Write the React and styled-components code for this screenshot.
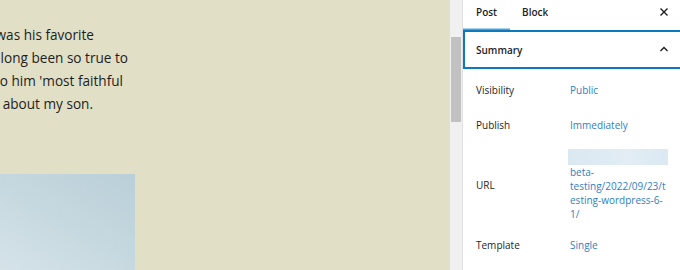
import styled, { createGlobalStyle } from "styled-components";

const GlobalStyle = createGlobalStyle`
  html, body {
    margin: 0;
    padding: 0;
    background: #ffffff;
  }
  body {
    font-family: "Open Sans", "Noto Sans", sans-serif;
  }
`;

const Page = styled.div`
  display: flex;
  width: 680px;
  height: 270px;
  overflow: hidden;
`;

const Editor = styled.div`
  width: 450px;
  flex-shrink: 0;
  background: #e1e0c6;
  display: flex;
  flex-direction: column;
  justify-content: space-between;
  overflow: hidden;
`;

const Paragraph = styled.div`
  padding-top: 23px;
  font-size: 13.6px;
  line-height: 23px;
  color: #1e1e1e;
  white-space: nowrap;
`;

/* the paragraph is scrolled off to the left, so each line is pinned by its end */
const Line = styled.div`
  display: flex;
  justify-content: flex-end;
  width: ${(p) => p.$end}px;
`;

const Picture = styled.div`
  width: 135px;
  height: 96px;
  background: linear-gradient(30deg, #d5e3e9 0%, #c6d8df 50%, #bacfd9 100%);
`;

const ScrollTrack = styled.div`
  width: 12px;
  flex-shrink: 0;
  background: #f0f0f0;
  padding: 37px 1px 0 1px;
  box-sizing: border-box;
`;

const ScrollThumb = styled.div`
  width: 10px;
  height: 85px;
  background: #c1c1c1;
`;

const Sidebar = styled.div`
  width: 218px;
  flex-shrink: 0;
  border-left: 1px solid #e0e0e0;
  background: #ffffff;
  font-size: 10px;
  color: #1e1e1e;
`;

const TabBar = styled.div`
  display: flex;
  align-items: stretch;
  height: 30px;
`;

const Tab = styled.div`
  padding: 0 ${(p) => (p.$active ? 13 : 12)}px 6px;
  display: flex;
  align-items: center;
  font-weight: 600;
  color: #1e1e1e;
  box-shadow: ${(p) => (p.$active ? "inset 0 -1.5px 0 #5a9fd2" : "none")};
`;

const IconButton = styled.div`
  margin-left: auto;
  width: 30px;
  display: flex;
  align-items: center;
  justify-content: center;
  padding-right: 2px;
  padding-bottom: ${(p) => p.$lift || 0}px;
`;

const PanelHeader = styled.div`
  height: 35px;
  border: 2px solid #0b78bf;
  border-right: none;
  display: flex;
  align-items: center;
  padding-left: 11px;
  font-weight: 600;
`;

const Rows = styled.div`
  padding: 3px 0 0 13px;
`;

const Row = styled.div`
  display: grid;
  grid-template-columns: 94px 1fr;
  align-items: center;
  min-height: ${(p) => p.$h || 35}px;
`;

const Label = styled.div`
  color: #1e1e1e;
`;

const Value = styled.div`
  color: #2f80c4;
  line-height: 14px;
`;

const Blur = styled.div`
  width: 100px;
  height: 16px;
  margin: 0 0 0 -2px;
  background: linear-gradient(90deg, #dae8f2, #e2edf5 60%, #dce9f2);
`;

export default function App() {
  return (
    <>
      <GlobalStyle />
      <Page>
        <Editor>
          <Paragraph>
            <Line $end={94}>was his favorite</Line>
            <Line $end={128}>long been so true to</Line>
            <Line $end={123}>o him 'most faithful</Line>
            <Line $end={93}>about my son.</Line>
          </Paragraph>
          <Picture />
        </Editor>
        <ScrollTrack>
          <ScrollThumb />
        </ScrollTrack>
        <Sidebar>
          <TabBar>
            <Tab $active>Post</Tab>
            <Tab>Block</Tab>
            <IconButton $lift={6}>
              <svg width="10" height="10" viewBox="0 0 10 10">
                <path d="M1.5 1.5 L8.5 8.5 M8.5 1.5 L1.5 8.5" stroke="#1e1e1e" strokeWidth="1.4" fill="none" />
              </svg>
            </IconButton>
          </TabBar>
          <PanelHeader>
            Summary
            <IconButton>
              <svg width="10" height="7" viewBox="0 0 10 7">
                <path d="M1.5 5 L5 1.5 L8.5 5" stroke="#1e1e1e" strokeWidth="1.4" fill="none" />
              </svg>
            </IconButton>
          </PanelHeader>
          <Rows>
            <Row>
              <Label>Visibility</Label>
              <Value>Public</Value>
            </Row>
            <Row>
              <Label>Publish</Label>
              <Value>Immediately</Value>
            </Row>
            <Row $h={86}>
              <Label>URL</Label>
              <Value>
                <Blur />
                beta-
                <br />
                testing/2022/09/23/t
                <br />
                esting-wordpress-6-
                <br />
                1/
              </Value>
            </Row>
            <Row $h={34}>
              <Label>Template</Label>
              <Value>Single</Value>
            </Row>
          </Rows>
        </Sidebar>
      </Page>
    </>
  );
}
